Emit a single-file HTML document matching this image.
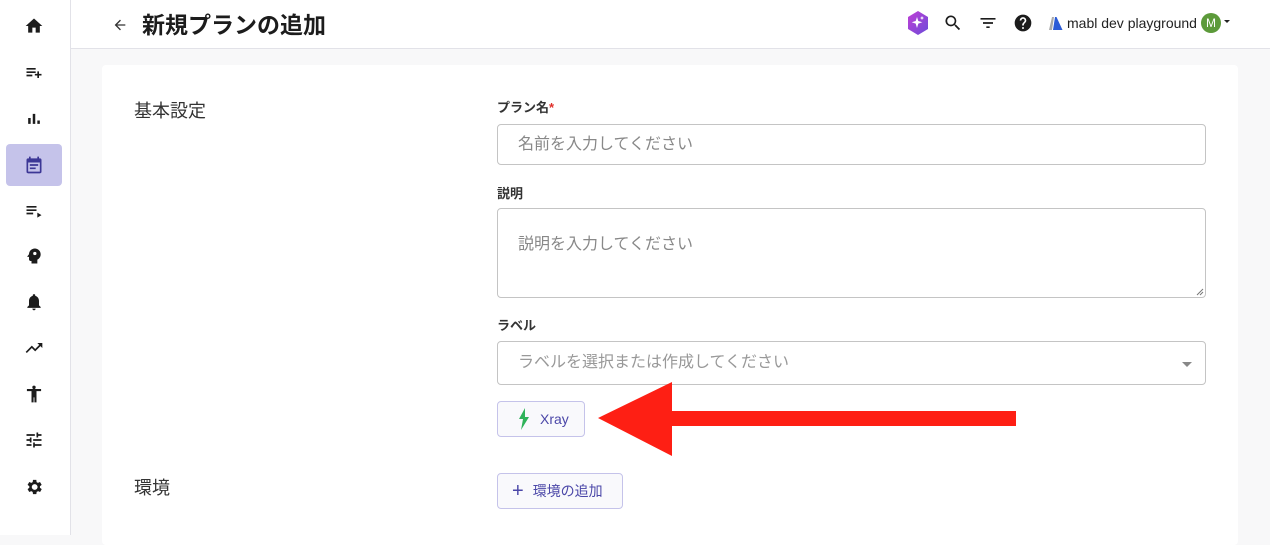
<!DOCTYPE html>
<html><head><meta charset="utf-8"><style>
*{box-sizing:border-box;margin:0;padding:0}
body{width:1270px;height:535px;overflow:hidden;background:#f8f8f9;font-family:"Liberation Sans","Noto Sans CJK JP",sans-serif;position:relative;color:#222}
.side{position:absolute;left:0;top:0;width:71px;height:535px;background:#fff;border-right:1px solid #e2e2e8;z-index:2}
.side svg{position:absolute;left:24px;width:20px;height:20px}
.sel{position:absolute;left:6px;top:144px;width:56px;height:42px;background:#c5c3ea;border-radius:4px}
.hdr{position:absolute;left:71px;top:0;right:0;height:49px;background:#fff;border-bottom:1px solid #e2e2e8}
.title{position:absolute;left:142px;top:6px;font-size:23px;font-weight:bold;color:#1c1c1c}
.card{position:absolute;left:102px;top:65px;width:1136px;height:480px;background:#fff;border-radius:4px}
.sec{position:absolute;font-size:18px;color:#333}
.lbl{position:absolute;left:497px;font-size:13px;font-weight:bold;color:#333}
.inp{position:absolute;left:497px;width:709px;border:1px solid #c4c4c4;border-radius:4px;background:#fff;font-size:16px;color:#888;padding-left:20px}
.btn{position:absolute;left:497px;height:36px;border:1px solid #c5c3ea;border-radius:4px;background:#f9f9fc;color:#4b47a8;font-size:14px;display:flex;align-items:center}
</style></head><body>
<div class="side">
<div class="sel"></div>
<svg style="top:16px" viewBox="0 0 24 24"><path d="M10 20v-6h4v6h5v-8h3L12 3 2 12h3v8z" fill="#1c1c1c"/></svg>
<svg style="top:63px" viewBox="0 0 24 24"><path d="M3 6h11v2H3zM3 10h11v2H3zM3 14h7v2H3zM16 13v-3h2v3h3v2h-3v3h-2v-3h-3v-2z" fill="#1c1c1c"/></svg>
<svg style="top:108px" viewBox="0 0 24 24"><path d="M5 12h3v7H5zM10.5 7h3v12h-3zM16 15h3v4h-3z" fill="#1c1c1c"/></svg>
<svg style="top:155px" viewBox="0 0 24 24"><path d="M19 4h-1V2h-2v2H8V2H6v2H5a2 2 0 0 0-2 2v14a2 2 0 0 0 2 2h14a2 2 0 0 0 2-2V6a2 2 0 0 0-2-2zm0 16H5V9h14zM7 11h10v2H7zm0 4h7v2H7z" fill="#3c3796"/></svg>
<svg style="top:201px" viewBox="0 0 24 24"><path d="M3 6h12v2H3zM3 10h12v2H3zM3 14h8v2H3zM16 14v6l5-3z" fill="#1c1c1c"/></svg>
<svg style="top:246px" viewBox="0 0 24 24"><path d="M13 3C9.2 3 6 6 6 9.9l-2 2.6c-.2.3 0 .5.4.5H6v3c0 1.1.9 2 2 2h1v3h7v-4.7c2.4-1.1 4-3.5 4-6.3 0-3.9-3.1-7-7-7zm0 4a2 2 0 1 1 0 4 2 2 0 0 1 0-4z" fill="#1c1c1c"/></svg>
<svg style="top:292px" viewBox="0 0 24 24"><path d="M12 22c1.1 0 2-.9 2-2h-4c0 1.1.9 2 2 2zm6-6v-5c0-3.1-1.6-5.6-4.5-6.3V4a1.5 1.5 0 0 0-3 0v.7C7.6 5.4 6 7.9 6 11v5l-2 2v1h16v-1z" fill="#1c1c1c"/></svg>
<svg style="top:338px" viewBox="0 0 24 24"><path d="M16 6l2.3 2.3-4.9 4.9-4-4L2 16.6 3.4 18l6-6 4 4 6.3-6.3L22 12V6z" fill="#1c1c1c"/></svg>
<svg style="top:384px" viewBox="0 0 24 24"><circle cx="12" cy="4" r="2" fill="#1c1c1c"/><path d="M20.5 6h-17v2.5H9V22h2.5v-6h1v6H15V8.5h5.5z" fill="#1c1c1c"/></svg>
<svg style="top:430px" viewBox="0 0 24 24"><path d="M3 17v2h6v-2zM3 5v2h10V5zm10 16v-2h8v-2h-8v-2h-2v6zM7 9v2H3v2h4v2h2V9zm14 4v-2H11v2zm-6-4h2V7h4V5h-4V3h-2z" fill="#1c1c1c"/></svg>
<svg style="top:477px" viewBox="0 0 24 24"><path d="M19.1 12.9a7 7 0 0 0 0-1.8l2.1-1.6-2-3.5-2.5 1a7 7 0 0 0-1.6-.9L14.8 3.5h-4l-.4 2.6c-.6.2-1.100.5-1.600.9l-2.500-1-2 3.500 2.100 1.600a7 7 0 0 0 0 1.800l-2.100 1.600 2 3.500 2.500-1c.5.4 1 .7 1.600.9l.4 2.600h4l.4-2.600c.6-.2 1.100-.5 1.600-.9l2.500 1 2-3.500zM12.800 15.500a3.500 3.500 0 1 1 0-7 3.500 3.500 0 0 1 0 7z" fill="#1c1c1c"/></svg>
</div>
<div class="hdr"></div>
<svg style="position:absolute;left:112px;top:17px" width="16" height="16" viewBox="0 0 24 24"><path d="M20 11H7.8l5.6-5.6L12 4l-8 8 8 8 1.4-1.4L7.8 13H20z" fill="#333"/></svg>
<div class="title">新規プランの追加</div>
<svg style="position:absolute;left:906px;top:10px" width="24" height="26" viewBox="0 0 24 26"><defs><linearGradient id="g" x1="0" y1="0" x2="1" y2="1"><stop offset="0" stop-color="#c13fd6"/><stop offset="1" stop-color="#6b4bd8"/></linearGradient></defs><path d="M12 1l10 6v12l-10 6-10-6V7z" fill="url(#g)"/><path d="M11 7l1.3 4 4 1.3-4 1.3L11 18l-1.3-4.4-4-1.3 4-1.3zM16 6l.6 1.4 1.4.6-1.4.6L16 10l-.6-1.4L14 8l1.4-.6z" fill="#fff"/></svg>
<svg style="position:absolute;left:943px;top:13px" width="20" height="20" viewBox="0 0 24 24"><path d="M15.5 14h-.8l-.3-.3A6.5 6.5 0 1 0 9.5 16a6.5 6.5 0 0 0 4.2-1.6l.3.3v.8l5 5 1.5-1.5zm-6 0a4.5 4.5 0 1 1 0-9 4.5 4.5 0 0 1 0 9z" fill="#1c1c1c"/></svg>
<svg style="position:absolute;left:978px;top:13px" width="20" height="20" viewBox="0 0 24 24"><path d="M10 18h4v-2h-4zM3 6v2h18V6zm3 7h12v-2H6z" fill="#1c1c1c"/></svg>
<svg style="position:absolute;left:1013px;top:13px" width="20" height="20" viewBox="0 0 24 24"><path d="M12 2a10 10 0 1 0 0 20 10 10 0 0 0 0-20zm1 17h-2v-2h2zm2.1-7.8l-.9.9C13.5 12.9 13 13.5 13 15h-2v-.5c0-1.1.4-2.1 1.2-2.8l1.2-1.3A2 2 0 1 0 10 9H8a4 4 0 1 1 8 0c0 .9-.4 1.7-.9 2.2z" fill="#1c1c1c"/></svg>
<svg style="position:absolute;left:1047px;top:15px" width="16" height="16" viewBox="0 0 16 16"><path d="M2 15L5 2h2l-2 13z" fill="#aaa"/><path d="M6 15l2-13h1.5l6 13z" fill="#2b5bd6"/></svg>
<div style="position:absolute;left:1067px;top:15px;font-size:14px;color:#222">mabl dev playground</div>
<div style="position:absolute;left:1201px;top:13px;width:20px;height:20px;border-radius:50%;background:#5c9a3a;color:#fff;font-size:12px;text-align:center;line-height:20px">M</div>
<div style="position:absolute;left:1224px;top:20px;border-left:3px solid transparent;border-right:3px solid transparent;border-top:3px solid #222"></div>
<div class="card"></div>
<div class="sec" style="left:134px;top:97px">基本設定</div>
<div class="sec" style="left:134px;top:474px">環境</div>
<div class="lbl" style="top:97px">プラン名<span style="color:#e0302a">*</span></div>
<div class="inp" style="top:124px;height:41px;line-height:39px">名前を入力してください</div>
<div class="lbl" style="top:183px">説明</div>
<div class="inp" style="top:208px;height:90px;padding-top:21px">説明を入力してください
<svg style="position:absolute;right:1px;bottom:1px" width="8" height="8"><path d="M1 7L7 1M4 7L7 4" stroke="#777" stroke-width="1"/></svg></div>
<div class="lbl" style="top:315px">ラベル</div>
<div class="inp" style="top:341px;height:44px;line-height:42px;color:#999">ラベルを選択または作成してください
<div style="position:absolute;right:13px;top:20px;border-left:5px solid transparent;border-right:5px solid transparent;border-top:5px solid #888"></div></div>
<div class="btn" style="top:401px;width:88px;padding-left:20px"><svg width="12" height="22" viewBox="0 0 12 22"><path d="M7 0L1 11h4l-2 11 8-13H7z" fill="#2fb35a"/></svg><span style="margin-left:10px">Xray</span></div>
<div class="btn" style="top:473px;width:126px;padding-left:14px"><span style="font-size:20px;line-height:20px">+</span><span style="margin-left:9px;font-size:14px">環境の追加</span></div>
<svg style="position:absolute;left:0;top:0" width="1270" height="535"><path d="M598 418L672 382V411H1016V426H672V456Z" fill="#fe1f14"/></svg>
</body></html>
